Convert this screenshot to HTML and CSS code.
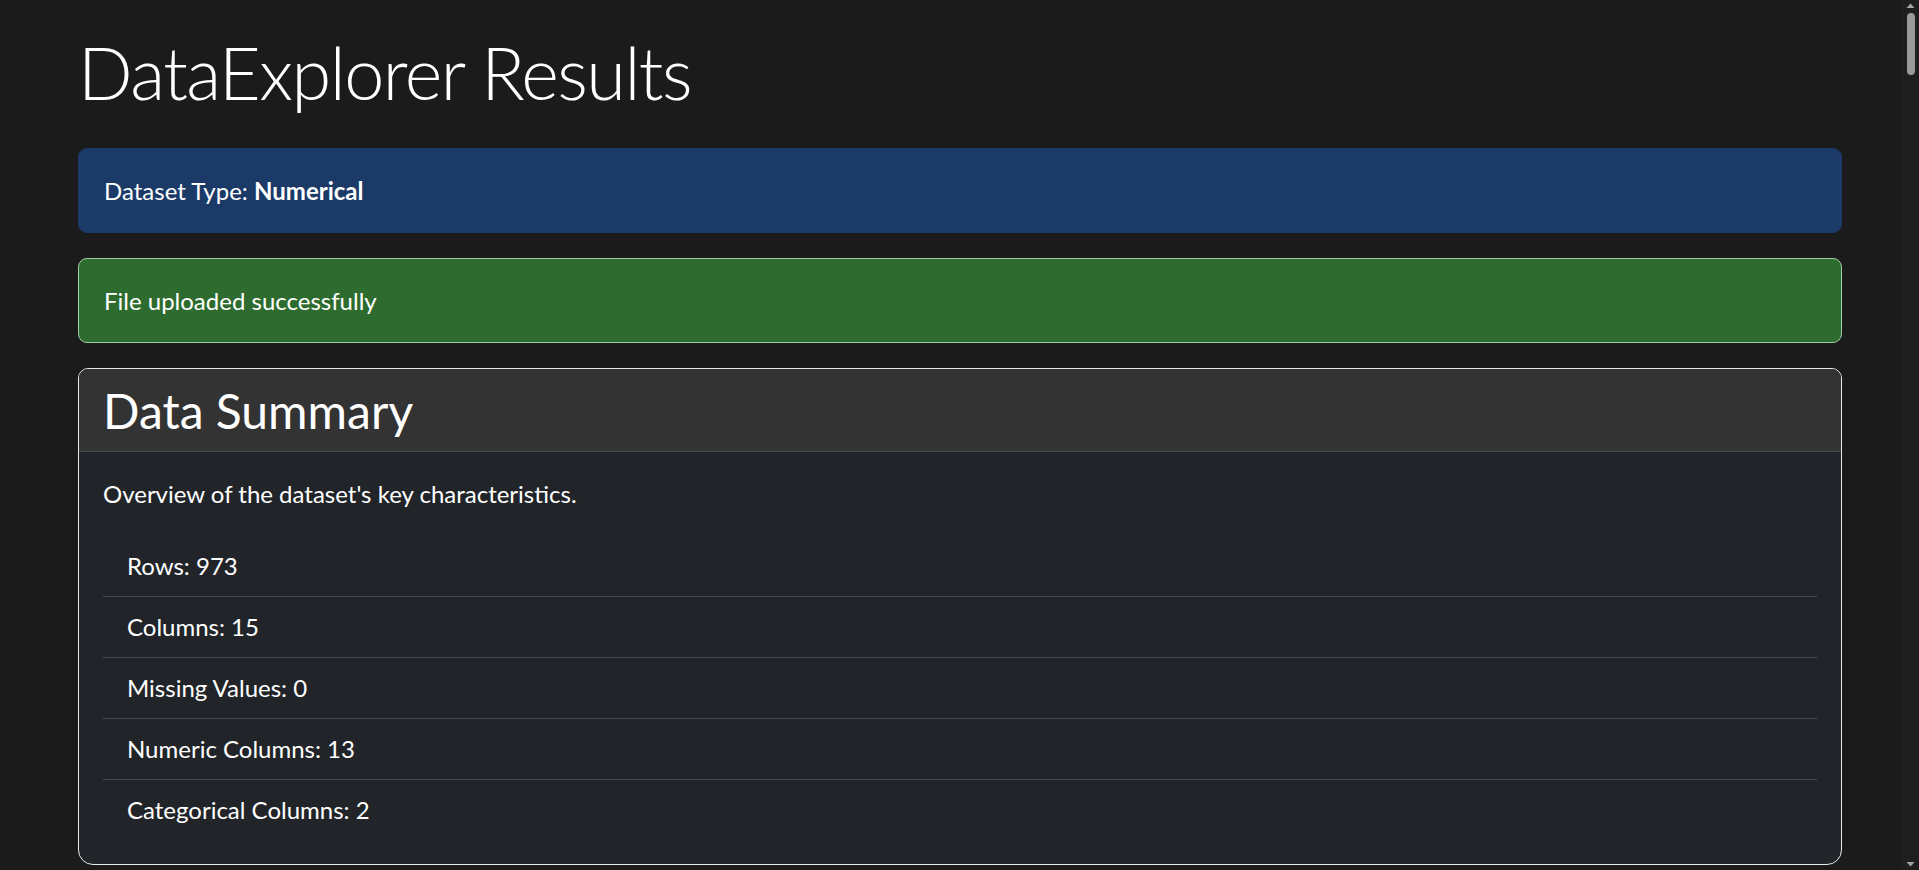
FILE: index.html
```html
<!DOCTYPE html>
<html lang="en">
<head>
<meta charset="utf-8">
<title>DataExplorer Results</title>
<link rel="stylesheet" href="styles.css">
</head>
<body>
<main class="page">
  <h1 class="page-title">DataExplorer Results</h1>

  <div class="alert alert-info">Dataset Type: <strong>Numerical</strong></div>

  <div class="alert alert-success">File uploaded successfully</div>

  <section class="card">
    <header class="card-header">
      <h2 class="card-title">Data Summary</h2>
    </header>
    <div class="card-body">
      <p class="card-text">Overview of the dataset's key characteristics.</p>
      <ul class="list-group">
        <li class="list-item">Rows: 973</li>
        <li class="list-item">Columns: 15</li>
        <li class="list-item">Missing Values: 0</li>
        <li class="list-item">Numeric Columns: 13</li>
        <li class="list-item">Categorical Columns: 2</li>
      </ul>
    </div>
  </section>
</main>

<div class="scrollbar" aria-hidden="true">
  <svg class="scroll-arrow" width="17" height="12" viewBox="0 0 17 12"><path d="M4.5 8 L8.5 3.5 L12.5 8 Z" fill="#a3a3a3"/></svg>
  <div class="scroll-track"><div class="scroll-thumb"></div></div>
  <svg class="scroll-arrow" width="17" height="12" viewBox="0 0 17 12"><path d="M4.5 4 L8.5 8.5 L12.5 4 Z" fill="#a3a3a3"/></svg>
</div>
</body>
</html>
```

FILE: styles.css
```css
html {
  color-scheme: dark;
}

body {
  margin: 0;
  background: #1b1b1b;
  color: #ffffff;
  font-family: "Lato", "Open Sans", "Liberation Sans", sans-serif;
  font-size: 24px;
  line-height: 36px;
}

.page {
  width: 1764px;
  margin-left: 78px;
  padding-top: 29px;
  padding-bottom: 60px;
  box-sizing: border-box;
}

.page-title {
  margin: 0 0 32px;
  font-size: 72px;
  font-weight: 300;
  line-height: 87px;
  letter-spacing: -1.5px;
}

.alert {
  height: 85px;
  box-sizing: border-box;
  margin-bottom: 25px;
  padding: 24px 25px 23px;
  border: 1px solid transparent;
  border-radius: 9px;
}

.alert-info {
  background: #1b3a68;
  border-color: #1b3a68;
}

.alert-info strong {
  font-weight: 700;
}

.alert-success {
  background: #2e6b2e;
  border-color: #9fcfa6;
}

.card {
  border: 1px solid #e9e9e9;
  border-radius: 10px 10px 15px 15px;
  background: #212529;
  overflow: hidden;
}

.card-header {
  background: #333333;
  padding: 13px 24px 11px;
  border-bottom: 1px solid #4b4b4b;
}

.card-title {
  margin: 0;
  font-size: 48px;
  font-weight: 400;
  line-height: 58px;
}

.card-body {
  padding: 24px;
}

.card-text {
  margin: 0 0 24px;
}

.list-group {
  list-style: none;
  margin: 0;
  padding: 0;
}

.list-item {
  padding: 12px 24px;
  border-bottom: 1px solid #46494e;
}

.list-item:last-child {
  border-bottom: none;
}

/* browser scrollbar as seen in the capture (page scrolled to top) */
.scrollbar {
  position: fixed;
  top: 0;
  right: 0;
  width: 17px;
  height: 100vh;
  background: #1e1e1e;
  display: flex;
  flex-direction: column;
}

.scroll-arrow {
  display: block;
  flex: none;
}

.scroll-track {
  flex: 1;
  padding: 1px 0 0 0;
}

.scroll-thumb {
  width: 8px;
  height: 62px;
  margin-left: 5px;
  border-radius: 4px;
  background: #9a9a9a;
}
```
